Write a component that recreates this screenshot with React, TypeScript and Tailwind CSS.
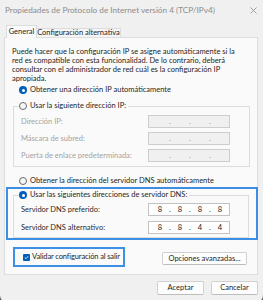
import { Fragment } from 'react';

function Radio({ checked }: { checked?: boolean }) {
  return checked ? (
    <span className="flex h-[8px] w-[8px] shrink-0 items-center justify-center rounded-full bg-[#005fb8]">
      <span className="h-[3px] w-[3px] rounded-full bg-white" />
    </span>
  ) : (
    <span className="h-[8px] w-[8px] shrink-0 rounded-full border border-[#6b6b6b] bg-[#f6f6f6]" />
  );
}

function IpBox({ values, disabled }: { values?: string[]; disabled?: boolean }) {
  const cells = values ?? ['', '', '', ''];
  return (
    <div
      className={`flex h-[13px] w-[82px] shrink-0 items-center border pl-[3px] leading-none ${
        disabled ? 'border-[#cdcdcd] bg-[#f0f0f0] text-[#9a9a9a]' : 'border-[#c2c2c2] bg-white text-[#1b1b1b]'
      }`}
    >
      {cells.map((v, i) => (
        <Fragment key={i}>
          {i > 0 && <span className="w-[4px] text-center">.</span>}
          <span className="w-[16px] text-center">{v}</span>
        </Fragment>
      ))}
    </div>
  );
}

function Row({ label, children, disabled }: { label: string; children: React.ReactNode; disabled?: boolean }) {
  return (
    <div className="flex h-[13px] items-center">
      <span className={`w-[127px] whitespace-nowrap ${disabled ? 'text-[#a3a3a3]' : 'text-[#2a2a2a]'}`}>{label}</span>
      {children}
    </div>
  );
}

export default function App() {
  return (
    <div className="h-[300px] w-[263px] overflow-hidden bg-[#5c5c5c]">
      <div className="flex h-[303px] w-[263px] flex-col rounded-b-[8px] bg-[#f0f0f0] font-['Lato',sans-serif] text-[7.5px] text-[#1f1f1f]">
        {/* title bar */}
        <div className="flex h-[21px] items-center justify-between pl-[5px] pr-[6px]">
          <span className="whitespace-nowrap text-[8.2px] text-[#8c8c8c]">
            Propiedades de Protocolo de Internet versión 4 (TCP/IPv4)
          </span>
          <svg width="7" height="7" viewBox="0 0 7 7" className="shrink-0">
            <path d="M0.5 0.5L6.5 6.5M6.5 0.5L0.5 6.5" stroke="#8c8c8c" strokeWidth="0.8" />
          </svg>
        </div>

        {/* tabs */}
        <div className="flex h-[16px] items-end pl-[6px]">
          <div className="relative z-10 -mb-px flex h-[13px] w-[31px] items-center justify-center border border-b-0 border-[#dcdcdc] bg-[#fafafa] pb-[1px]">
            General
          </div>
          <div className="flex h-[9px] w-[84px] items-center justify-center whitespace-nowrap border border-b-0 border-l-0 border-[#dcdcdc] bg-[#f5f5f5]">
            Configuración alternativa
          </div>
        </div>

        {/* panel */}
        <div className="ml-[4px] flex h-[238px] w-[254px] flex-col border border-[#dedede] bg-[#fafafa]">
          <p className="whitespace-nowrap pl-[7px] pt-[9px] leading-[9px]">
            Puede hacer que la configuración IP se asigne automáticamente si la
            <br />
            red es compatible con esta funcionalidad. De lo contrario, deberá
            <br />
            consultar con el administrador de red cuál es la configuración IP
            <br />
            apropiada.
          </p>

          <div className="ml-[14px] mt-[2px] flex h-[10px] items-center gap-[3px]">
            <Radio checked />
            <span>Obtener una dirección IP automáticamente</span>
          </div>

          <fieldset className="ml-[8px] mr-[7px] mt-[6px] border border-[#dcdcdc] px-[7px] pb-[4px]">
            <legend className="-ml-[2px] pr-[2px]">
              <span className="flex h-[10px] items-center gap-[3px]">
                <Radio />
                <span>Usar la siguiente dirección IP:</span>
              </span>
            </legend>
            <div className="mt-[4px] flex flex-col gap-[4px]">
              <Row label="Dirección IP:" disabled>
                <IpBox disabled />
              </Row>
              <Row label="Máscara de subred:" disabled>
                <IpBox disabled />
              </Row>
              <Row label="Puerta de enlace predeterminada:" disabled>
                <IpBox disabled />
              </Row>
            </div>
          </fieldset>

          <div className="ml-[14px] mt-[9px] flex h-[10px] items-center gap-[3px]">
            <Radio />
            <span>Obtener la dirección del servidor DNS automáticamente</span>
          </div>

          <div className="-mr-px ml-px mt-px border-2 border-[#3d8fe6]">
            <fieldset className="ml-[5px] mr-[7px] mt-px border border-[#dcdcdc] px-[7px] pb-[3px]">
              <legend className="-ml-[2px] pr-[2px]">
                <span className="flex h-[10px] items-center gap-[3px]">
                  <Radio checked />
                  <span>Usar las siguientes direcciones de servidor DNS:</span>
                </span>
              </legend>
              <div className="mt-[3px] flex flex-col gap-[5px]">
                <Row label="Servidor DNS preferido:">
                  <IpBox values={['8', '8', '8', '8']} />
                </Row>
                <Row label="Servidor DNS alternativo:">
                  <IpBox values={['8', '8', '4', '4']} />
                </Row>
              </div>
            </fieldset>
          </div>

          <div className="mt-[7px] flex items-center justify-between pl-[8px] pr-[10px]">
            <div className="flex h-[20px] w-[112px] items-center gap-[2px] border-2 border-[#3d8fe6] pl-[8px]">
              <span className="flex h-[7px] w-[7px] shrink-0 items-center justify-center rounded-[1px] bg-[#005fb8]">
                <svg width="5" height="5" viewBox="0 0 5 5">
                  <path d="M0.8 2.6L2 3.7L4.2 1.2" stroke="white" strokeWidth="0.8" fill="none" />
                </svg>
              </span>
              <span className="whitespace-nowrap tracking-[-0.12px]">Validar configuración al salir</span>
            </div>
            <button
              type="button"
              className="mt-[3px] flex h-[13px] w-[85px] items-center justify-center whitespace-nowrap rounded-[2px] border border-[#d0d0d0] border-b-[#bdbdbd] bg-[#fdfdfd]"
            >
              Opciones avanzadas...
            </button>
          </div>
        </div>

        {/* dialog buttons */}
        <div className="mt-[6px] flex justify-end gap-[7px] pr-[5px]">
          <button
            type="button"
            className="flex h-[14px] w-[47px] items-center justify-center rounded-[2px] border border-[#d0d0d0] border-b-[#bdbdbd] bg-[#fdfdfd]"
          >
            Aceptar
          </button>
          <button
            type="button"
            className="flex h-[14px] w-[47px] items-center justify-center rounded-[2px] border border-[#d0d0d0] border-b-[#bdbdbd] bg-[#fdfdfd]"
          >
            Cancelar
          </button>
        </div>
      </div>
    </div>
  );
}
